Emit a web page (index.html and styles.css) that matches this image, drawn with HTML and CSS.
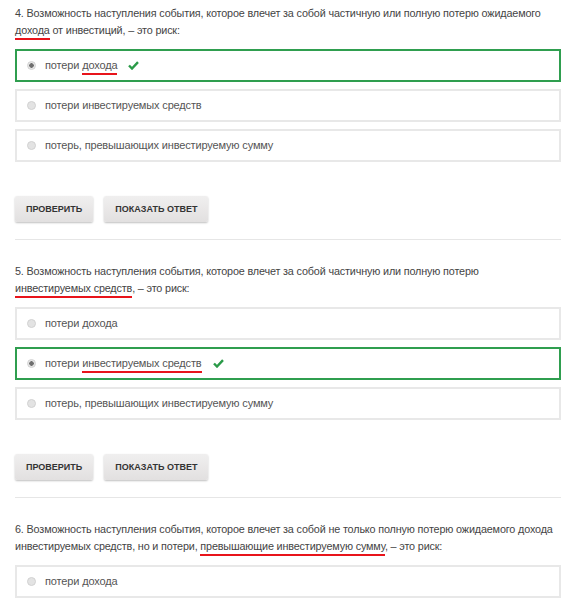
FILE: index.html
```html
<!DOCTYPE html>
<html lang="ru">
<head>
    <meta charset="UTF-8">
    <meta name="viewport" content="width=device-width, initial-scale=1.0">
    <title>Тест</title>
    <link rel="stylesheet" href="styles.css">
</head>
<body>

<div class="quiz">

    <!-- Question 4 -->
    <div class="question">
        <p class="question-text">4. Возможность наступления события, которое влечет за собой частичную или полную потерю ожидаемого <span class="mark">дохода</span> от инвестиций, – это риск:</p>
        <ul class="options">
            <li class="option correct">
                <span class="radio checked"></span>
                <span class="label">потери <span class="mark">дохода</span></span>
                <svg class="tick" width="11" height="9" viewBox="0 0 11 9"><path d="M1 4.5 L4 7.5 L10 1.2" fill="none" stroke="#2a9a48" stroke-width="2.4"/></svg>
            </li>
            <li class="option"><span class="radio"></span><span class="label">потери инвестируемых средств</span></li>
            <li class="option"><span class="radio"></span><span class="label">потерь, превышающих инвестируемую сумму</span></li>
        </ul>
        <div class="buttons">
            <button class="btn">Проверить</button>
            <button class="btn">Показать ответ</button>
        </div>
    </div>

    <!-- Question 5 -->
    <div class="question">
        <p class="question-text">5. Возможность наступления события, которое влечет за собой частичную или полную потерю <span class="mark">инвестируемых средств</span>, – это риск:</p>
        <ul class="options">
            <li class="option"><span class="radio"></span><span class="label">потери дохода</span></li>
            <li class="option correct">
                <span class="radio checked"></span>
                <span class="label">потери <span class="mark">инвестируемых средств</span></span>
                <svg class="tick" width="11" height="9" viewBox="0 0 11 9"><path d="M1 4.5 L4 7.5 L10 1.2" fill="none" stroke="#2a9a48" stroke-width="2.4"/></svg>
            </li>
            <li class="option"><span class="radio"></span><span class="label">потерь, превышающих инвестируемую сумму</span></li>
        </ul>
        <div class="buttons">
            <button class="btn">Проверить</button>
            <button class="btn">Показать ответ</button>
        </div>
    </div>

    <!-- Question 6 -->
    <div class="question">
        <p class="question-text">6. Возможность наступления события, которое влечет за собой не только полную потерю ожидаемого дохода инвестируемых средств, но и потери, <span class="mark">превышающие инвестируемую сумму</span>, – это риск:</p>
        <ul class="options">
            <li class="option"><span class="radio"></span><span class="label">потери дохода</span></li>
            <li class="option"><span class="radio"></span><span class="label">потери инвестируемых средств</span></li>
            <li class="option"><span class="radio"></span><span class="label">потерь, превышающих инвестируемую сумму</span></li>
        </ul>
    </div>

</div>

</body>
</html>
```

FILE: styles.css
```css
body {
    margin: 0;
    font-family: "Liberation Sans", Arial, sans-serif;
    font-size: 11px;
    line-height: 17px;
    letter-spacing: -0.15px;
    color: #444;
    background: #fff;
}

.quiz {
    padding: 5px 25px 0 15px;
}

/* Question block */
.question {
    border-bottom: 1px solid #e6e6e6;
    padding-bottom: 17px;
    margin-bottom: 23px;
}

.question-text {
    margin: 0 0 10px;
    font-size: 10.8px;
}

.mark {
    white-space: nowrap;
    padding-bottom: 2px;
    border-bottom: 2px solid #e8141b;
}

/* Answer options */
.options {
    list-style: none;
    margin: 0;
    padding: 0;
}

.option {
    display: flex;
    align-items: center;
    height: 29px;
    padding: 0 10px;
    border: 2px solid #e8e8e8;
    margin-bottom: 7px;
    color: #555;
}

.option.correct {
    border-color: #2f9e4f;
}

.radio {
    width: 7px;
    height: 7px;
    border-radius: 50%;
    border: 1px solid #d2d2d2;
    background: #e3e3e3;
    margin-right: 9px;
    flex-shrink: 0;
}

.radio.checked {
    background: radial-gradient(circle, #6f6f6f 0 2px, #e6e6e6 2.5px);
}

.tick {
    margin-left: 11px;
}

/* Buttons */
.buttons {
    display: flex;
    gap: 11px;
    margin-top: 34px;
}

.btn {
    font-family: "Liberation Sans", Arial, sans-serif;
    font-size: 9px;
    font-weight: bold;
    letter-spacing: 0;
    text-transform: uppercase;
    color: #333;
    height: 26px;
    padding: 0 11px;
    border: none;
    border-radius: 2px;
    background: linear-gradient(#f0efef, #e2e0e0);
    box-shadow: 0 1px 2px rgba(0, 0, 0, 0.25);
}
```
